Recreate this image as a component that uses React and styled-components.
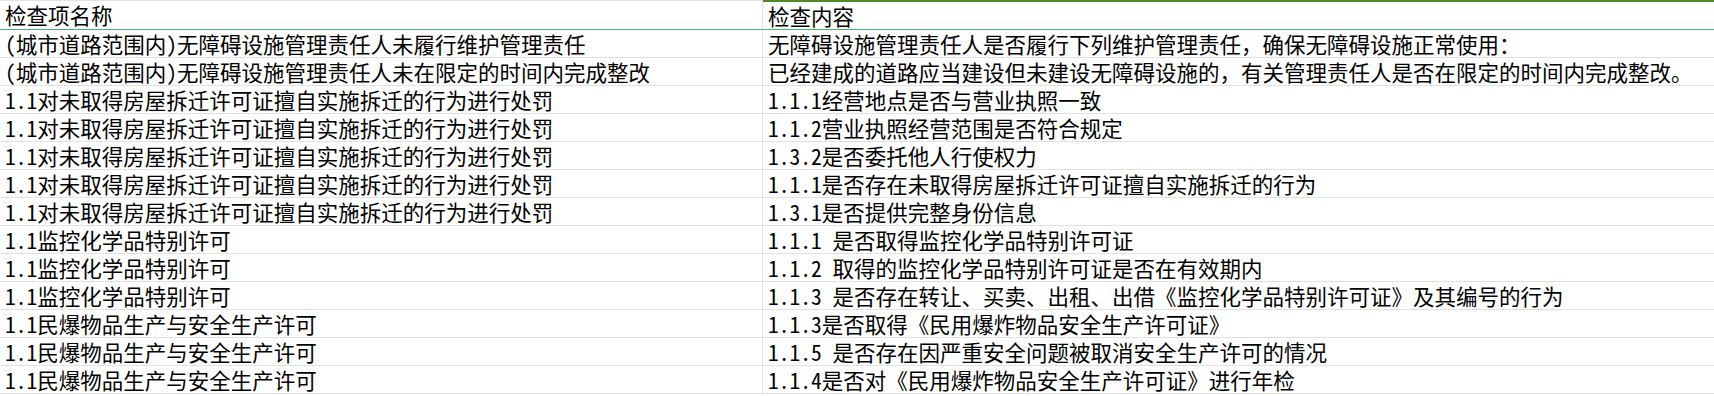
import React from 'react';
import styled, { createGlobalStyle } from 'styled-components';

const rows = [
  ['(城市道路范围内)无障碍设施管理责任人未履行维护管理责任', '无障碍设施管理责任人是否履行下列维护管理责任，确保无障碍设施正常使用：'],
  ['(城市道路范围内)无障碍设施管理责任人未在限定的时间内完成整改', '已经建成的道路应当建设但未建设无障碍设施的，有关管理责任人是否在限定的时间内完成整改。'],
  ['1.1对未取得房屋拆迁许可证擅自实施拆迁的行为进行处罚', '1.1.1经营地点是否与营业执照一致'],
  ['1.1对未取得房屋拆迁许可证擅自实施拆迁的行为进行处罚', '1.1.2营业执照经营范围是否符合规定'],
  ['1.1对未取得房屋拆迁许可证擅自实施拆迁的行为进行处罚', '1.3.2是否委托他人行使权力'],
  ['1.1对未取得房屋拆迁许可证擅自实施拆迁的行为进行处罚', '1.1.1是否存在未取得房屋拆迁许可证擅自实施拆迁的行为'],
  ['1.1对未取得房屋拆迁许可证擅自实施拆迁的行为进行处罚', '1.3.1是否提供完整身份信息'],
  ['1.1监控化学品特别许可', '1.1.1 是否取得监控化学品特别许可证'],
  ['1.1监控化学品特别许可', '1.1.2 取得的监控化学品特别许可证是否在有效期内'],
  ['1.1监控化学品特别许可', '1.1.3 是否存在转让、买卖、出租、出借《监控化学品特别许可证》及其编号的行为'],
  ['1.1民爆物品生产与安全生产许可', '1.1.3是否取得《民用爆炸物品安全生产许可证》'],
  ['1.1民爆物品生产与安全生产许可', '1.1.5 是否存在因严重安全问题被取消安全生产许可的情况'],
  ['1.1民爆物品生产与安全生产许可', '1.1.4是否对《民用爆炸物品安全生产许可证》进行年检'],
];

const GlobalStyle = createGlobalStyle`
  html, body {
    margin: 0;
    padding: 0;
    background: #ffffff;
  }
`;

const App = () => {
  return (
    <>
      <GlobalStyle />
      <Sheet>
        <HeaderCell>检查项名称</HeaderCell>
        <HeaderCell $active>检查内容</HeaderCell>
        {rows.map(([name, content], i) => (
          <React.Fragment key={i}>
            <Cell $first>{name}</Cell>
            <Cell>{content}</Cell>
          </React.Fragment>
        ))}
      </Sheet>
    </>
  );
};

const Sheet = styled.div`
  display: grid;
  grid-template-columns: 763px 1fr;
  width: 1714px;
  align-content: start;
  font-family: "Noto Sans Mono CJK SC", "Noto Sans CJK SC", monospace;
  font-size: 21.5px;
  color: #000000;
  background: #ffffff;
`;

const HeaderCell = styled.div`
  box-sizing: border-box;
  height: 30px;
  line-height: 27px;
  padding-left: 5px;
  white-space: nowrap;
  border-top: ${(p) => (p.$active ? '2px solid #4b8b2b' : '1px solid #e2e2e2')};
  border-bottom: 1px solid #4fae78;
  border-right: ${(p) => (p.$active ? 'none' : '1px solid #e2e2e2')};
`;

const Cell = styled.div`
  box-sizing: border-box;
  height: 28px;
  line-height: 27px;
  padding-left: 5px;
  white-space: nowrap;
  border-bottom: 1px solid #e2e2e2;
  border-right: ${(p) => (p.$first ? '1px solid #e2e2e2' : 'none')};
`;

export default App;
